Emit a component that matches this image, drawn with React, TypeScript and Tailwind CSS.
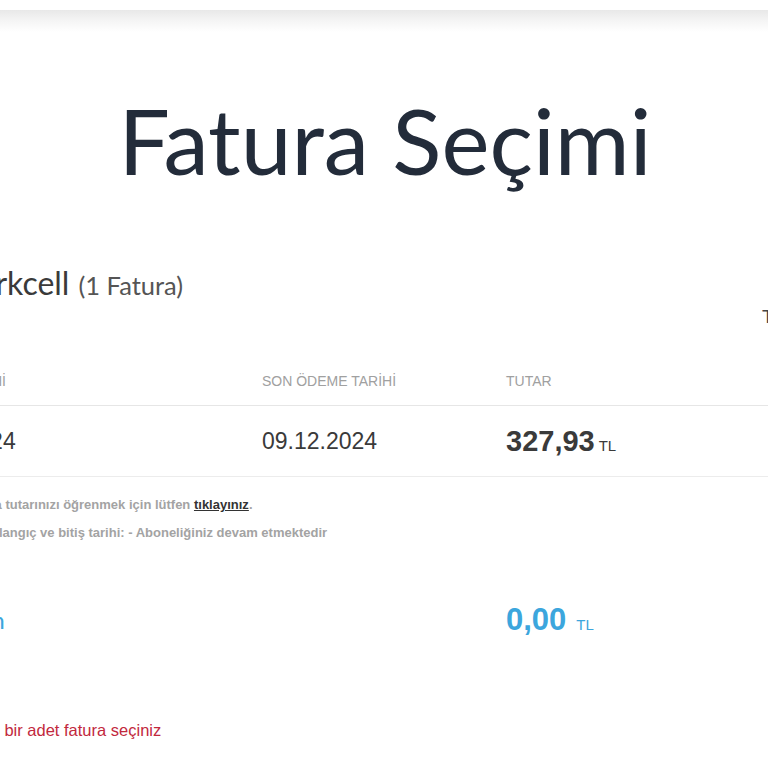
import React from "react";

export default function App() {
  return (
    <div className="relative w-[768px] h-[768px] overflow-hidden bg-white" style={{ fontFamily: "Arial, 'Liberation Sans', sans-serif" }}>
      <div className="h-[10px] bg-white" />
      <div className="h-[22px] bg-gradient-to-b from-[#e8e8e8] via-[#f5f5f5] to-white" />

      <h1 className="mt-[63px] text-center text-[91px] leading-[90px] text-[#232c3a] pl-[2px]" style={{ fontFamily: "Lato, sans-serif" }}>
        Fatura Seçimi
      </h1>

      <div className="ml-[-130px] w-[1030px]">
        <div className="mt-[80px] flex items-baseline pl-[92px]" style={{ fontFamily: "Lato, sans-serif" }}>
          <span className="text-[32px] leading-[36px] text-[#3a3a3a]">Turkcell</span>
          <span className="ml-[9px] text-[25.5px] text-[#555555]">(1 Fatura)</span>
        </div>
        <div className="pl-[892px] text-[19px] leading-[22px] text-[#444] mt-[2px]">Toplam</div>

        <div className="mt-[43px] flex border-b border-[#e6e6e6] pb-[14px] text-[14px] leading-[20px] text-[#a0a0a0] pl-[34px]">
          <div className="w-[358px]">FATURA TARİHİ</div>
          <div className="w-[244px]">SON ÖDEME TARİHİ</div>
          <div>TUTAR</div>
        </div>

        <div className="flex h-[71px] items-center border-b border-[#ececec] pl-[34px] text-[#3a3a3a]">
          <div className="w-[358px] text-[23px]">11.11.2024</div>
          <div className="w-[244px] text-[23px]">09.12.2024</div>
          <div className="flex items-baseline">
            <span className="text-[29px] font-bold">327,93</span>
            <span className="ml-[4px] text-[15px]">TL</span>
          </div>
        </div>

        <div className="mt-[14px] pl-[48px] text-[13px] font-bold leading-[28px] text-[#a3a3a3]">
          <div>
            Güncel fatura tutarınızı öğrenmek için lütfen{" "}
            <span className="text-[#333] underline">tıklayınız</span>.
          </div>
          <div>Abonelik başlangıç ve bitiş tarihi: - Aboneliğiniz devam etmektedir</div>
        </div>

        <div className="mt-[53px] flex h-[40px] items-center pl-[29px] text-[#3ca6dd]">
          <div className="w-[607px] pl-[30px] text-[24px]" style={{ fontFamily: "Lato, sans-serif" }}>Toplam</div>
          <div className="flex items-baseline">
            <span className="text-[31px] font-bold">0,00</span>
            <span className="ml-[10px] text-[15px]">TL</span>
          </div>
        </div>

        <div className="mt-[80px] pl-[39px] text-[16.5px] leading-[20px] text-[#c2283d]">
          Lütfen en az bir adet fatura seçiniz
        </div>
      </div>
    </div>
  );
}
